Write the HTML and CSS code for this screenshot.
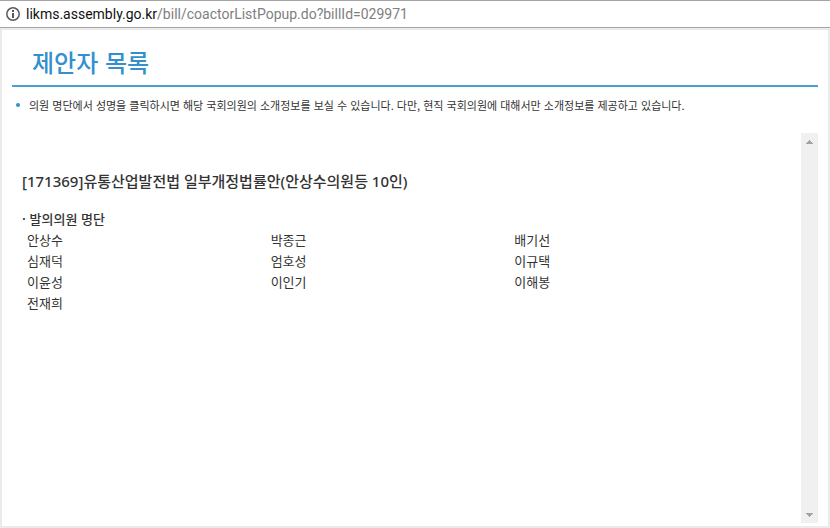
FILE: index.html
```html
<!DOCTYPE html>
<html lang="ko">
<head>
  <meta charset="UTF-8">
  <title>제안자 목록</title>
  <link rel="stylesheet" href="styles.css">
</head>
<body>
  <div class="address-bar">
    <svg class="info-icon" width="14" height="14" viewBox="0 0 14 14" aria-hidden="true">
      <circle cx="7" cy="7" r="6.2" fill="none" stroke="#5a5a5a" stroke-width="1.5"/>
      <path d="M6 3h2v2H6zM6 6h2v5H6z" fill="#5a5a5a"/>
    </svg>
    <div class="url"><span class="host">likms.assembly.go.kr</span>/bill/coactorListPopup.do?billId=029971</div>
  </div>

  <div class="popup">
    <h1>제안자 목록</h1>
    <ul class="notice">
      <li>의원 명단에서 성명을 클릭하시면 해당 국회의원의 소개정보를 보실 수 있습니다. 다만, 현직 국회의원에 대해서만 소개정보를 제공하고 있습니다.</li>
    </ul>

    <div class="scroll-area">
      <div class="content">
        <h2>[171369]유통산업발전법 일부개정법률안(안상수의원등 10인)</h2>
        <h3 id="members">· 발의의원 명단</h3>
        <table class="members" aria-labelledby="members">
          <tbody>
            <tr><td>안상수</td><td>박종근</td><td>배기선</td></tr>
            <tr><td>심재덕</td><td>엄호성</td><td>이규택</td></tr>
            <tr><td>이윤성</td><td>이인기</td><td>이해봉</td></tr>
            <tr><td>전재희</td><td></td><td></td></tr>
          </tbody>
        </table>
      </div>
      <div class="scrollbar">
        <button type="button" aria-label="위로">
          <svg width="7" height="4" viewBox="0 0 7 4"><path d="M3 0h1v1h1v1h1v1h1v1H0V3h1V2h1V1h1z" fill="#a3a3a3"/></svg>
        </button>
        <button type="button" aria-label="아래로">
          <svg width="7" height="4" viewBox="0 0 7 4"><path d="M0 0h7v1H6v1H5v1H4v1H3V3H2V2H1V1H0z" fill="#a3a3a3"/></svg>
        </button>
      </div>
    </div>
  </div>
</body>
</html>
```

FILE: styles.css
```css
* {
  box-sizing: border-box;
}
body {
  display: flex;
  flex-direction: column;
  min-height: 100vh;
  margin: 0;
  background-color: #fff;
  color: #333;
  font-family: "Noto Sans CJK KR", sans-serif;
  font-size: 13px;
}
h1, h2, h3, ul {
  margin: 0;
  padding: 0;
}
.address-bar {
  display: flex;
  align-items: center;
  gap: 6px;
  height: 28px;
  padding: 0 6px;
  border-top: 1px solid #a5a5a5;
  border-bottom: 1px solid #a5a5a5;
}
.url {
  color: #808080;
  font-family: Roboto, "Noto Sans CJK KR", sans-serif;
  font-size: 14px;
  line-height: 20px;
}
.host {
  color: #111;
}
.popup {
  display: flex;
  flex: 1;
  flex-direction: column;
  padding: 12px 10px 3px;
  border: 2px solid #ebebeb;
}
h1 {
  padding: 0 20px 4px;
  border-bottom: 2px solid #4a9fd4;
  color: #338fcf;
  font-size: 24px;
  font-weight: 500;
  line-height: 39px;
}
.notice {
  padding: 8px 4px 18px;
  font-size: 11px;
  line-height: 20px;
  list-style: none;
}
.notice li {
  display: flex;
  align-items: center;
  gap: 9px;
}
.notice li::before {
  content: "";
  width: 4px;
  height: 4px;
  border-radius: 50%;
  background-color: #338fcf;
}
.scroll-area {
  display: flex;
  flex: 1;
}
.content {
  flex: 1;
  padding: 36px 48px 0 10px;
}
h2 {
  margin-bottom: 15px;
  font-family: "Noto Sans", "Noto Sans CJK KR", sans-serif;
  font-size: 15px;
  font-weight: 500;
  line-height: 24px;
}
h3 {
  font-size: 13px;
  font-weight: 500;
  line-height: 21px;
}
.members {
  width: 100%;
  border-collapse: collapse;
  table-layout: fixed;
}
.members td {
  padding: 0 5px;
  line-height: 21px;
}
.scrollbar {
  display: flex;
  flex-direction: column;
  justify-content: space-between;
  width: 17px;
  background-color: #f0f0f0;
}
.scrollbar button {
  display: flex;
  align-items: center;
  justify-content: center;
  height: 17px;
  padding: 0;
  border: 0;
  background: none;
}
```
